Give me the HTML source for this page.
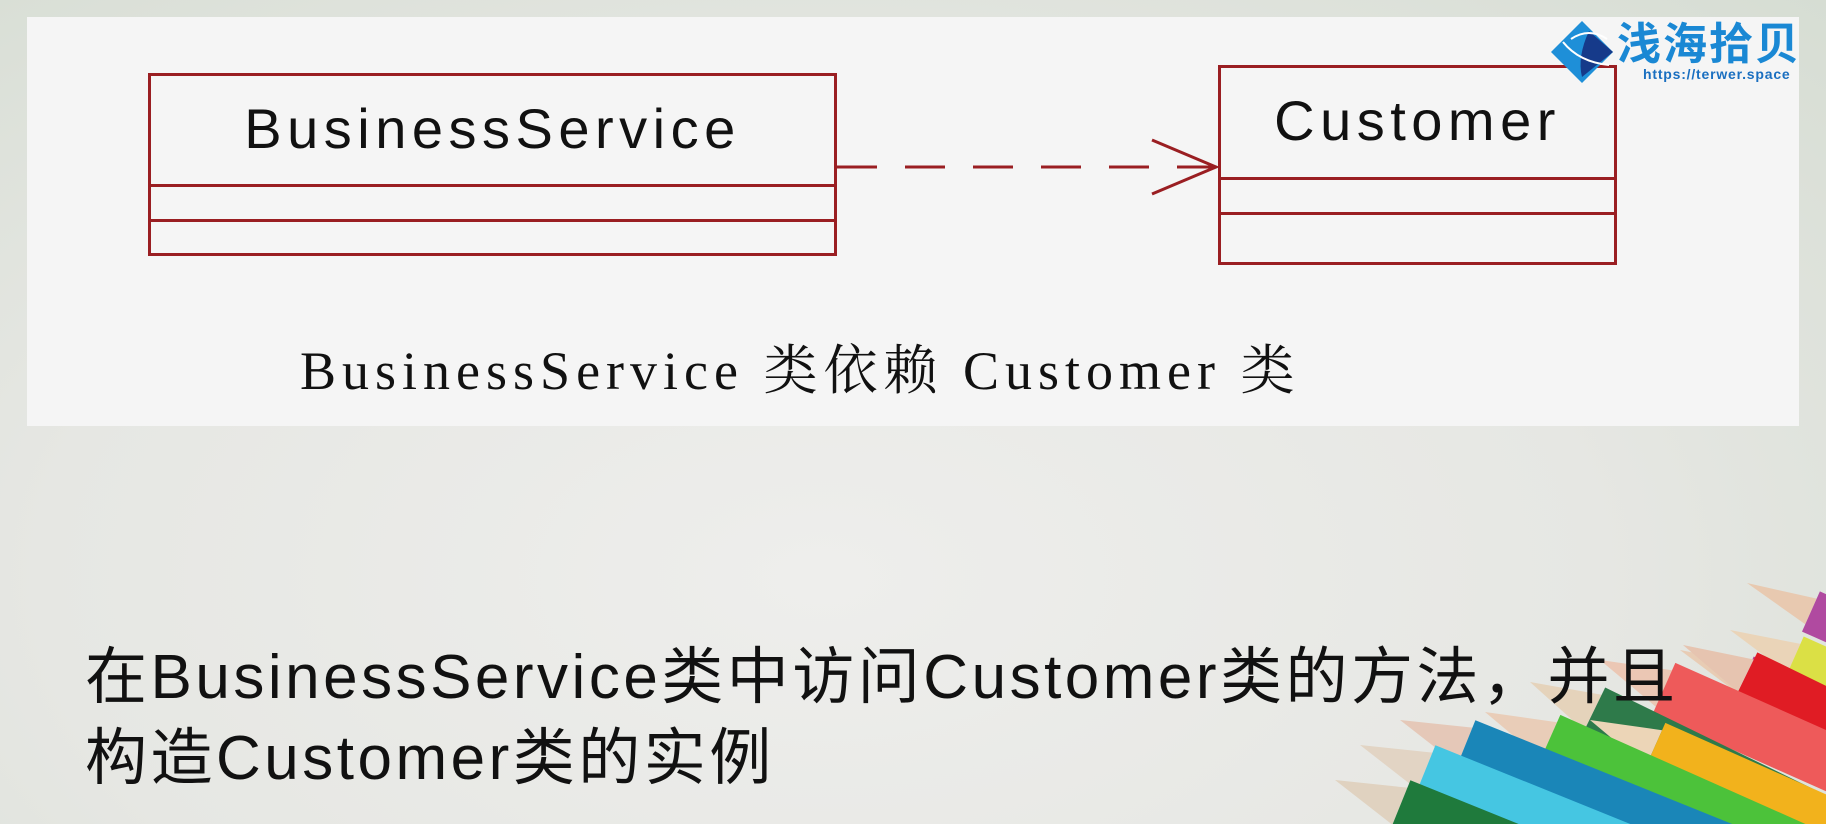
<!DOCTYPE html>
<html><head><meta charset="utf-8"><style>
body{margin:0;width:1826px;height:824px;overflow:hidden;background:#e4e6e1;position:relative;font-family:"Liberation Sans","Noto Sans CJK SC",sans-serif}
.bg{position:absolute;inset:0;background:radial-gradient(ellipse at 45% 70%,#eeeeec 0%,#e6e7e3 55%,#d6ddd3 100%)}
.panel{position:absolute;left:27px;top:17px;width:1772px;height:409px;background:#f5f5f5}
.box{position:absolute;border:3px solid #9a1e22;box-sizing:border-box}
.hl{position:absolute;left:0;right:0;height:3px;background:#9a1e22}
.cls{position:absolute;left:0;right:0;text-align:center;font-size:56px;letter-spacing:5.5px;color:#111;font-family:"Liberation Sans",sans-serif}
.cap{position:absolute;left:300px;top:339px;font-family:"Liberation Serif","Noto Serif CJK SC",serif;font-size:54px;letter-spacing:6px;color:#111;white-space:nowrap;line-height:1.2}
.t{position:absolute;left:85px;font-size:62px;letter-spacing:3.5px;line-height:1;color:#111;white-space:nowrap;font-family:"Liberation Sans","Noto Sans CJK SC",sans-serif}
</style></head><body>
<div class="bg"></div>
<svg style="position:absolute;left:0;top:0" width="1826" height="824">
<g transform="translate(1747,583) rotate(24)"><polygon points="0,0 70,-14 70,14" fill="#e8c9b0"/><rect x="70" y="-22" width="300" height="44" fill="#b04aa0"/></g>
<g transform="translate(1730,630) rotate(24)"><polygon points="0,0 70,-16 70,16" fill="#ead4b8"/><rect x="70" y="-24" width="300" height="48" fill="#dbe045"/></g>
<g transform="translate(1680,650) rotate(24)"><polygon points="0,0 70,-16 70,16" fill="#e8ccb4"/><rect x="70" y="-24" width="300" height="48" fill="#c03c8a"/></g>
<g transform="translate(1683,645) rotate(26)"><polygon points="0,0 70,-18 70,18" fill="#e6c4b0"/><rect x="70" y="-26" width="300" height="52" fill="#e01c24"/></g>
<g transform="translate(1600,660) rotate(24)"><polygon points="0,0 70,-20 70,20" fill="#ebc7b4"/><rect x="70" y="-28" width="300" height="56" fill="#ee5a5a"/></g>
<g transform="translate(1530,682) rotate(26)"><polygon points="0,0 70,-20 70,20" fill="#e5d3bb"/><rect x="70" y="-28" width="300" height="56" fill="#2e7a4a"/></g>
<g transform="translate(1590,720) rotate(24)"><polygon points="0,0 70,-20 70,20" fill="#ecd5b7"/><rect x="70" y="-28" width="300" height="56" fill="#f2b21c"/></g>
<g transform="translate(1485,712) rotate(24)"><polygon points="0,0 70,-20 70,20" fill="#e9cdb8"/><rect x="70" y="-28" width="300" height="56" fill="#4cc23a"/></g>
<g transform="translate(1400,720) rotate(22)"><polygon points="0,0 70,-20 70,20" fill="#e5c8b8"/><rect x="70" y="-28" width="300" height="56" fill="#1a86b8"/></g>
<g transform="translate(1360,745) rotate(22)"><polygon points="0,0 70,-20 70,20" fill="#e2d4c4"/><rect x="70" y="-28" width="300" height="56" fill="#45c6e2"/></g>
<g transform="translate(1335,780) rotate(22)"><polygon points="0,0 70,-20 70,20" fill="#e0d2c0"/><rect x="70" y="-28" width="300" height="56" fill="#1f7a3c"/></g>
</svg>
<div class="panel"></div>
<div class="box" style="left:148px;top:73px;width:689px;height:183px">
 <div class="cls" style="top:20px">BusinessService</div>
 <div class="hl" style="top:108px"></div><div class="hl" style="top:143px"></div>
</div>
<div class="box" style="left:1218px;top:65px;width:399px;height:200px">
 <div class="cls" style="top:20px">Customer</div>
 <div class="hl" style="top:109px"></div><div class="hl" style="top:144px"></div>
</div>
<svg style="position:absolute;left:0;top:0" width="1826" height="300">
<line x1="837" y1="167" x2="1216" y2="167" stroke="#9a1e22" stroke-width="3" stroke-dasharray="40,28"/>
<polyline points="1152,140 1216,167 1152,194" fill="none" stroke="#9a1e22" stroke-width="3"/>
</svg>
<div class="cap">BusinessService 类依赖 Customer 类</div>
<div class="t" style="top:647px">在BusinessService类中访问Customer类的方法，并且</div>
<div class="t" style="top:728px">构造Customer类的实例</div>
<svg style="position:absolute;left:1549px;top:17px" width="277" height="68">
<polygon points="33,4 64,35 33,66 2,35" fill="#1e8fd8"/>
<path d="M40,14 L64,35 L33,60 Q28,40 40,14Z" fill="#163a8a"/>
<path d="M14,25 Q30,45 60,48 M22,22 Q40,10 58,22" stroke="#fff" stroke-width="2" fill="none"/>
<text x="68" y="42" font-family="Noto Sans CJK SC,sans-serif" font-weight="bold" font-size="44" letter-spacing="2" fill="#1a88d4">浅海拾贝</text>
<text x="94" y="62" font-family="Liberation Sans,sans-serif" font-weight="bold" font-size="14" letter-spacing="0.8" fill="#1a6fc0">https://terwer.space</text>
</svg>
</body></html>
